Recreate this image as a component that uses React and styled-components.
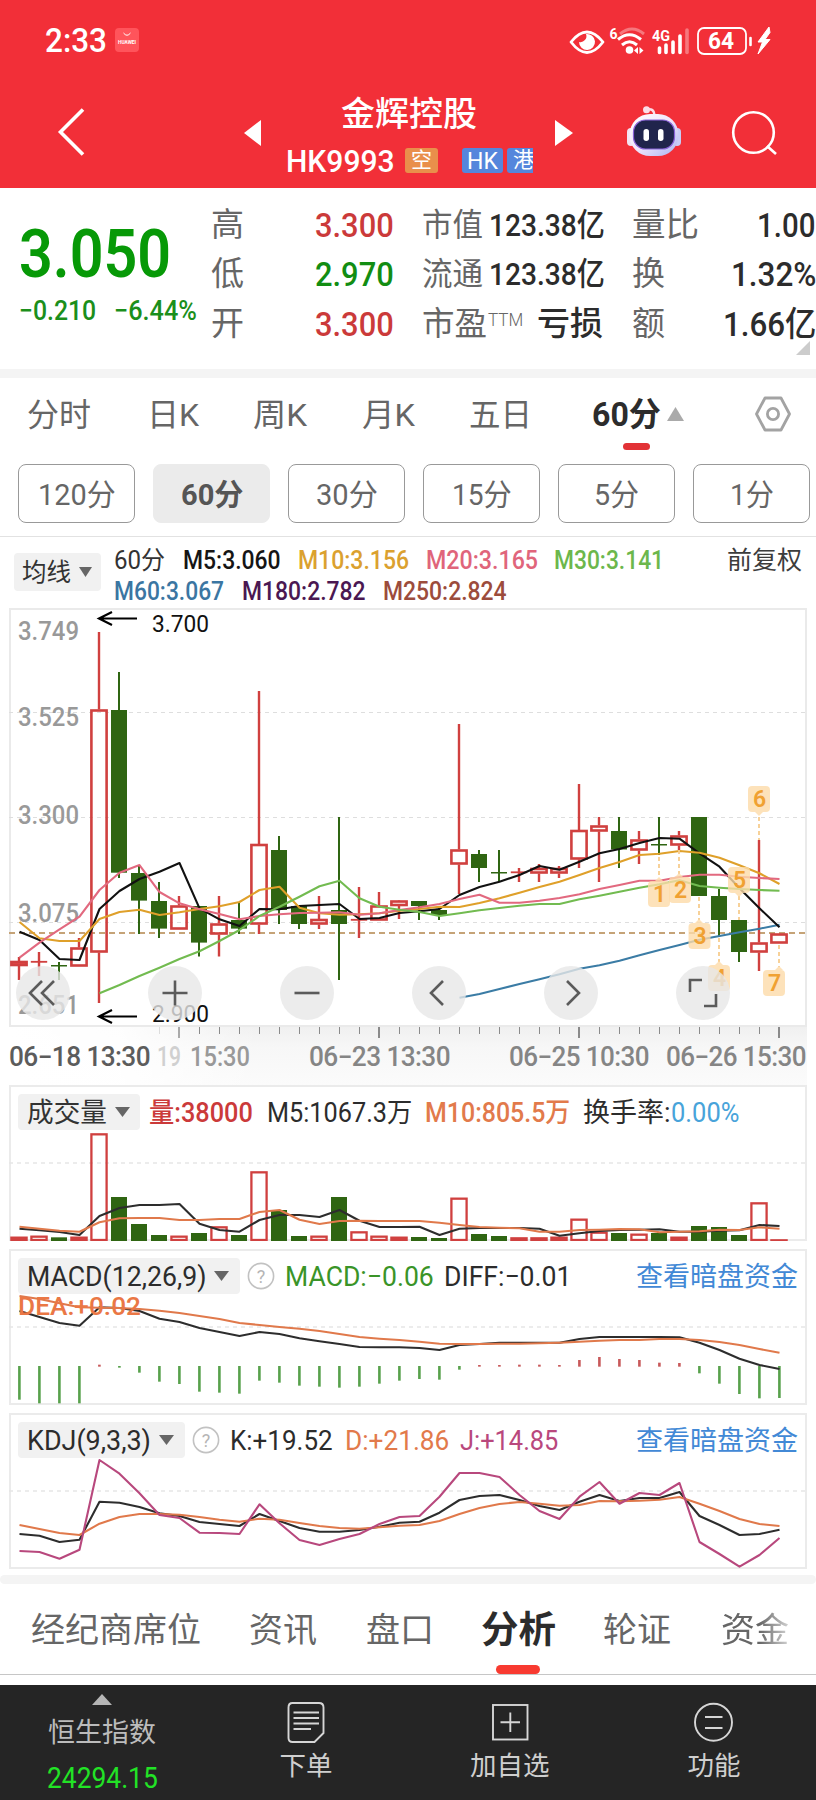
import React, { useLayoutEffect, useRef, useState } from "react";
import styled, { createGlobalStyle } from "styled-components";

const FONT = 'Roboto, "Noto Sans CJK SC", sans-serif';

const GlobalStyle = createGlobalStyle`
  * { box-sizing: border-box; }
  body { margin: 0; background: #fff; font-family: ${FONT}; }
  svg { display: block; flex: none; }
`;

/* ---------- text that is condensed to a given advance width ---------- */

const TextBox = styled.span`
  display: block;
  flex: none;
  width: ${(p) => p.$w}px;
  height: ${(p) => p.$lh}px;
  line-height: ${(p) => p.$lh}px;
  margin-left: ${(p) => p.$ml || 0}px;
  font-size: ${(p) => p.$size}px;
  font-weight: ${(p) => p.$weight || 400};
  color: ${(p) => p.$color || "inherit"};
  white-space: nowrap;
`;
const TextInner = styled.span`
  display: inline-block;
  transform-origin: 0 50%;
`;

function Text({ w, size, lh = 40, ml, weight, color, children }) {
  const ref = useRef(null);
  const [scale, setScale] = useState(1);
  useLayoutEffect(() => {
    setScale(w / ref.current.offsetWidth);
  }, [w, size, children]);
  return (
    <TextBox $w={w} $lh={lh} $ml={ml} $size={size} $weight={weight} $color={color}>
      <TextInner ref={ref} style={{ transform: `translateY(1px) scaleX(${scale})` }}>{children}</TextInner>
    </TextBox>
  );
}

/* ---------- header ---------- */

const Screen = styled.main`
  width: 816px;
  height: 1800px;
  overflow: hidden;
  display: flex;
  flex-direction: column;
  background: #fff;
`;
const Header = styled.header`
  height: 188px;
  flex: none;
  background: #f22f38;
  color: #fff;
`;
const StatusBar = styled.div`
  height: 79px;
  padding: 0 0 0 45px;
  display: flex;
  align-items: center;
`;
const AppBadge = styled.svg`
  margin: 0 429px 0 8px;
`;
const TitleBar = styled.div`
  height: 109px;
  display: flex;
`;
const TitleIcon = styled.svg`
  margin: ${(p) => p.$top}px 0 0 ${(p) => p.$left}px;
`;
const TitleBlock = styled.div`
  width: 248px;
  margin-left: 24px;
  padding-top: 13px;
`;
const Name = styled.div`
  padding-left: 55px;
`;
const CodeRow = styled.div`
  margin-top: 9px;
  display: flex;
  align-items: center;
`;
const Tag = styled.span`
  width: ${(p) => p.$w}px;
  height: 25px;
  margin-left: ${(p) => p.$ml}px;
  padding-left: ${(p) => p.$pad}px;
  border-radius: ${(p) => (p.$cut ? "3px 0 0 3px" : "3px")};
  background: ${(p) => p.$bg};
  overflow: hidden;
`;

function StatusIcons() {
  return (
    <svg width="204" height="32" viewBox="567 22 204 32" fill="none" stroke="#fff">
      <path d="M570 40 Q586 20 602 40 Q586 61 570 40Z" strokeWidth="2.800" strokeLinejoin="round" />
      <path d="M585 32 A8 8 0 1 1 578 40 A6 6 0 0 0 585 32Z" fill="#fff" stroke="none" />
      <text x="608.500" y="36.500" fontSize="14" fontWeight="700" fill="#fff" stroke="none">6</text>
      <path d="M619 32 Q631 22 643 32" strokeWidth="3" opacity=".35" />
      <path d="M617 37.500 Q628.500 28 640 37.500" strokeWidth="3" />
      <path d="M621 43 Q628.500 36.500 636 43" strokeWidth="3" />
      <circle cx="628.500" cy="48" r="3.800" fill="#fff" stroke="none" />
      <path d="M633 48.500 L637 45 V52ZM642.500 48.500 L638.500 45 V52Z" fill="#fff" stroke="none" />
      <text x="651" y="38.500" fontSize="15.500" fontWeight="700" fill="#fff" stroke="none" textLength="18" lengthAdjust="spacingAndGlyphs">4G</text>
      <path d="M658.500 46 V50.500 M665 43 V50.500 M672 40 V50.500 M679 34 V50.500" strokeWidth="3.600" strokeLinecap="round" />
      <path d="M686 28 V50.500" strokeWidth="3.600" strokeLinecap="round" opacity=".35" />
      <rect x="697" y="26" width="48" height="26" rx="6" strokeWidth="1.800" />
      <text x="707" y="47" fontSize="23" fontWeight="700" fill="#fff" stroke="none" textLength="26" lengthAdjust="spacingAndGlyphs">64</text>
      <path d="M749.500 36 V43" strokeWidth="2.600" strokeLinecap="round" />
      <path d="M768 25 L757 40 L761.500 40 L757 52 L769 37.500 L764 37.500 L769 30.500Z" fill="#fff" stroke="#fff" strokeWidth="1" />
    </svg>
  );
}

function Robot() {
  return (
    <TitleIcon $top={27} $left={53} width="56" height="52" viewBox="0 0 56 52">
      <defs>
        <linearGradient id="shell" x1="0" y1="0" x2="1" y2="1">
          <stop offset="0" stopColor="#fff" />
          <stop offset=".5" stopColor="#f1e5fb" />
          <stop offset="1" stopColor="#a7b4f2" />
        </linearGradient>
      </defs>
      <path d="M21 3.500 Q28 2 28.500 9" fill="none" stroke="#fbdde8" strokeWidth="2.500" />
      <circle cx="20.500" cy="3.800" r="3.500" fill="#fbdde8" />
      <rect x="1" y="22" width="8" height="18" rx="4" fill="#f3e3f2" />
      <rect x="47" y="22" width="8" height="18" rx="4" fill="#c9ccf6" />
      <rect x="3.500" y="8" width="49" height="42" rx="20.500" fill="url(#shell)" />
      <rect x="7.500" y="14" width="41" height="29" rx="12" fill="#20244c" stroke="#8a62d8" strokeWidth="1.200" />
      <rect x="17.500" y="23" width="5.500" height="12" rx="2.700" fill="#fff" />
      <rect x="32" y="23" width="5.500" height="12" rx="2.700" fill="#fff" />
    </TitleIcon>
  );
}

/* ---------- quote summary ---------- */

const Quote = styled.section`
  height: 181px;
  flex: none;
  display: flex;
  position: relative;
`;
const Price = styled.div`
  width: 212px;
  padding: 29px 0 0 19px;
`;
const Change = styled.div`
  display: flex;
  margin-top: 6px;
`;
const Facts = styled.div`
  padding-top: 11px;
`;
const Fact = styled.div`
  display: flex;
  align-items: center;
  height: 49.6px;
`;
const Sup = styled.span`
  display: flex;
  padding-bottom: 8px;
`;
const Corner = styled.svg`
  position: absolute;
  right: 6px;
  bottom: 14px;
`;
const Band = styled.div`
  height: 9px;
  flex: none;
  background: #f4f4f4;
`;

const GREEN = "#079907";
const RED = "#cb3a3a";
const LABEL = "#666";
const DARK = "#2c2c2c";

/* ---------- period tabs and chips ---------- */

const Periods = styled.nav`
  height: 86px;
  flex: none;
  display: flex;
  padding-top: 16px;
`;
const ActivePeriod = styled.div`
  margin-left: 60px;
  width: 95px;
`;
const PeriodRow = styled.div`
  display: flex;
  align-items: center;
  gap: 6px;
`;
const Bar = styled.div`
  width: ${(p) => p.$w}px;
  height: ${(p) => p.$h}px;
  margin: ${(p) => p.$m};
  border-radius: 5px;
  background: ${(p) => p.$bg};
`;
const Gear = styled.svg`
  margin: 1px 0 0 67px;
`;
const Chips = styled.div`
  height: 73px;
  flex: none;
  padding-left: 18px;
  display: flex;
  gap: 18px;
  border-bottom: 1px solid #e2e2e2;
`;
const Chip = styled.div`
  width: 117px;
  height: 59px;
  flex: none;
  display: flex;
  justify-content: center;
  align-items: center;
  border-radius: 8px;
  border: 1px solid ${(p) => (p.$on ? "#ebebeb" : "#999")};
  background: ${(p) => (p.$on ? "#ebebeb" : "#fff")};
`;

/* ---------- charts ---------- */

const MaHead = styled.div`
  height: 71px;
  flex: none;
  padding-left: 14px;
  display: flex;
`;
const Picker = styled.div`
  height: ${(p) => p.$h || 36}px;
  width: ${(p) => p.$w}px;
  padding-left: ${(p) => p.$pad || 9}px;
  margin-top: ${(p) => p.$mt || 0}px;
  flex: none;
  display: flex;
  align-items: center;
  gap: 8px;
  border-radius: 4px;
  background: #f1f1f1;
`;
const MaLines = styled.div`
  padding-top: 6px;
  margin-left: 13px;
  width: 600px;
  flex: none;
`;
const Adjust = styled.div`
  padding-top: 6px;
  margin-left: 13px;
`;
const MaRow = styled.div`
  display: flex;
  height: 31px;
`;
const ChartArea = styled.section`
  position: relative;
  height: 477px;
  flex: none;
`;
const Controls = styled.div`
  position: absolute;
  left: 16px;
  top: 358px;
  display: flex;
  gap: 78px;
`;
const RoundButton = styled.div`
  width: 54px;
  height: 54px;
  border-radius: 50%;
  background: rgba(231, 231, 231, 0.8);
`;
const Panel = styled.section`
  position: relative;
  height: 156px;
  width: 798px;
  margin: 0 0 8px 9px;
  flex: none;
`;
const PanelHead = styled.div`
  position: absolute;
  left: 9px;
  top: 9px;
  display: flex;
  align-items: center;
`;
const Help = styled.svg`
  margin-left: ${(p) => p.$ml}px;
`;

const X = (i) => 19 + 20 * i;
const CHART_RED = "#d0403f";
const CHART_GREEN = "#2f6512";

function Line({ ys, from = 0, base, color, width = 2.1 }) {
  const points = ys.map((y, i) => `${X(i + from) + 0.5},${(base + y / 3).toFixed(1)}`).join(" ");
  return <polyline points={points} fill="none" stroke={color} strokeWidth={width} strokeLinejoin="round" />;
}

/* kind, body top, body bottom, wick top, wick bottom */
const candles = [
  ["r", 961, 966, 957, 980], ["r", 961.5, 962.5, 952, 976], ["g", 965, 966.5, 962, 980], ["r", 947.5, 966.5, 938, 947],
  ["r", 709.5, 952.5, 632, 1003], ["g", 710, 872.7, 672, 878], ["g", 873, 900.6, 865, 934], ["g", 901, 928.6, 882, 938],
  ["r", 905.5, 929.5, 896, 905], ["g", 906, 942.6, 906, 956.5], ["r", 923.5, 934.5, 896, 956.5], ["g", 920, 928.6, 902, 934],
  ["r", 844, 924.5, 691, 934], ["g", 850, 910, 836, 924], ["g", 906, 924, 906, 929], ["r", 919, 924.5, 896, 929],
  ["g", 910, 924, 817, 980], ["r", 919.5, 920.5, 887, 938], ["r", 905.5, 920.5, 892, 906], ["r", 900.5, 906, 900, 919],
  ["g", 901, 906, 901, 920], ["g", 910, 915, 906, 920], ["r", 849.5, 864.5, 724, 894], ["g", 854, 868, 850, 882],
  ["g", 872, 873.5, 850, 882], ["r", 872, 873.5, 868, 882], ["r", 868, 873.5, 864, 882], ["r", 868, 873.5, 866, 878],
  ["r", 830, 859.5, 784, 868], ["r", 825.5, 831.5, 817, 882], ["g", 831, 849.5, 817, 868], ["r", 839.5, 850.5, 831, 864],
  ["g", 844, 845.5, 817, 855], ["r", 835.5, 845.5, 831, 850], ["g", 817, 896, 817, 896], ["g", 896, 920, 889, 937],
  ["g", 920, 952, 920, 962], ["r", 942.5, 952.5, 840, 971], ["r", 933.5, 943.5, 934, 943],
];

function Candle({ i, c: [kind, top, bottom, high, low] }) {
  const x = X(i);
  if (kind === "g") {
    return (
      <g fill={CHART_GREEN}>
        <rect x={x - 1} y={high} width="2" height={low - high} />
        <rect x={x - 8} y={top} width="16" height={bottom - top} />
      </g>
    );
  }
  const flat = bottom - top < 2;
  const solid = bottom - top < 5.5 && i < 16;
  return (
    <g>
      <rect x={x - 1.2} y={high} width="2.400" height={Math.max(0, (flat ? low : top) - high)} fill={CHART_RED} />
      {!flat && <rect x={x - 1.2} y={bottom} width="2.400" height={Math.max(0, low - bottom)} fill={CHART_RED} />}
      <rect x={x - 7.6} y={top + (flat ? 0 : 1)} width="15.200" height={Math.max(0.6, bottom - top - 2)}
        fill={flat ? CHART_RED : solid ? "#ee4a49" : "none"} stroke={CHART_RED} strokeWidth={flat ? 1.2 : 2.6} />
    </g>
  );
}

const ma5 = [425,450,507,510,357,303,267,245,219,355,388,408,357,358,348,345,342,387,384,369,364,357,315,291,275,255,228,239,215,190,177,159,144,146,190,230,295,355,412];
const ma10 = [396,445,453,453,387,366,359,375,367,357,349,336,300,290,353,370,374,373,370,362,357,350,351,339,325,308,291,275,255,234,216,195,191,183,188,203,226,250,282];
const ma20 = [503,458,418,380,300,248,225,306,340,358,372,388,378,373,369,368,367,374,370,360,352,342,327,314,338,338,332,324,313,297,285,272,272,261,254,254,260,264,267];
const ma30 = [610,585,558,533,507,484,453,420,378,350,320,289,272,325,350,359,366,378,370,361,354,347,342,342,328,317,305,293,283,271,288,293,297,300,302];
const ma60 = [623,612,597,582,568,553,536,526,512,496,480,465,449,438,427,416,404];

/* label, box left, box top, pointer side, dashed line x, y1, y2 */
const marks = [
  [1, 648, 881, "up", 659, 857, 878], [2, 669, 877, "up", 679, 850, 874], [3, 688.5, 923, "up", 699, 897, 920],
  [4, 708, 965, "up", 719, 938, 962], [5, 728, 867, "down", 739, 896, 920], [6, 748, 786, "down", 759, 817, 840],
  [7, 763, 970, "up", 779, 945, 967],
];

const Dash = ({ y, x1 = 9, x2 = 806, color = "#dedede", w = 1.2, d = "4 4" }) => (
  <line x1={x1} x2={x2} y1={y} y2={y} stroke={color} strokeWidth={w} strokeDasharray={d} />
);

const Fixed = ({ x, y, w, size, color, weight = 400, spacing = 0, children }) => (
  <text x={x} y={y} textLength={w} lengthAdjust="spacingAndGlyphs" letterSpacing={spacing} fontSize={size} fontWeight={weight} fill={color}>
    {children}
  </text>
);

function PriceChart() {
  return (
    <ChartArea>
      <svg width="816" height="477" viewBox="0 608 816 477">
        <defs>
          <linearGradient id="axis" x1="0" y1="0" x2="0" y2="1">
            <stop offset="0" stopColor="#f0f0f0" />
            <stop offset=".35" stopColor="#f7f7f7" />
            <stop offset="1" stopColor="#fbfbfb" />
          </linearGradient>
          <linearGradient id="fade" x1="0" y1="0" x2="1" y2="0">
            <stop offset="0" stopColor="#fff" />
            <stop offset=".45" stopColor="#fff" stopOpacity=".9" />
            <stop offset="1" stopColor="#fff" stopOpacity="0" />
          </linearGradient>
        </defs>
        <rect x="10" y="1027" width="797" height="58" fill="url(#axis)" />
        <rect x="9" y="1027" width="250" height="58" fill="url(#fade)" />
        <rect x="10" y="609" width="796" height="417" fill="none" stroke="#eaeaea" strokeWidth="2" />
        <Dash y={712.5} />
        <Dash y={817.5} />
        <Dash y={922.5} />
        {[["3.749", 640], ["3.525", 726], ["3.300", 824], ["3.075", 922], ["2.651", 1014]].map(([t, y]) => (
          <Fixed key={t} x={18} y={y} w={61} size={26} color="#999" weight={500}>{t}</Fixed>
        ))}
        <Dash y={933} color="#c5a377" w={1.8} d="6 4" />
        {candles.map((c, i) => <Candle key={i} i={i} c={c} />)}
        <Line ys={ma60} from={22} base={790} color="#3b7ca5" />
        <Line ys={ma5} base={790} color="#111" />
        <Line ys={ma10} base={790} color="#dfa02a" />
        <Line ys={ma20} base={790} color="#e2697f" />
        <Line ys={ma30} from={4} base={790} color="#72bb50" />
        {marks.map(([n, x, y, side, lx, y1, y2]) => (
          <g key={n}>
            <line x1={lx} x2={lx} y1={y1} y2={y2} stroke="#f7cd8e" strokeWidth="1.800" strokeDasharray="4 3" />
            <g fill="#fddcaa" opacity=".8">
              <rect x={x} y={y} width="22" height="26" rx="4" />
              {side === "up" ? <path d={`M${lx - 4} ${y} L${lx} ${y - 4} L${lx + 4} ${y}Z`} />
                : <path d={`M${lx - 4} ${y + 26} L${lx} ${y + 30} L${lx + 4} ${y + 26}Z`} />}
            </g>
            <text x={x + 11.5} y={y + 21} textAnchor="middle" fontSize="23" fontWeight="600" fill="#f0a132">{n}</text>
          </g>
        ))}
        {[[618.5, 632.3, "3.700"], [1016.5, 1022, "2.900"]].map(([ay, ty, t]) => (
          <g key={t}>
            <path d={`M137 ${ay} H99 M112 ${ay - 6.5} L99 ${ay} L112 ${ay + 6.5}`} stroke="#000" strokeWidth="2.200" fill="none" />
            <Fixed x={152} y={ty} w={57} size={24.5} color="#111">{t}</Fixed>
          </g>
        ))}
        {Array.from({ length: 32 }, (_, k) => k + 7).map((i) => {
          const major = i % 10 === 8;
          return <line key={i} x1={X(i) + (major ? 0 : 0.5)} x2={X(i) + (major ? 0 : 0.5)} y1="1027" y2={major ? 1038 : 1034}
            stroke="#8a8a8a" strokeWidth={major ? 2 : 1} opacity={i === 7 ? 0.25 : i === 8 ? 0.7 : 1} />;
        })}
        <Fixed x={9} y={1066} w={141} size={27} spacing={-0.6} color="#5c5c5c" weight={500}>06−18 13:30</Fixed>
        <Fixed x={157} y={1066} w={24} size={27} color="#d0d0d0" weight={500}>19</Fixed>
        <Fixed x={190} y={1066} w={60} size={27} color="#999" weight={500}>15:30</Fixed>
        <Fixed x={309} y={1066} w={141} size={27} spacing={-0.6} color="#858585" weight={500}>06−23 13:30</Fixed>
        <Fixed x={509} y={1066} w={140} size={27} spacing={-0.6} color="#858585" weight={500}>06−25 10:30</Fixed>
        <Fixed x={666} y={1066} w={140} size={27} spacing={-0.6} color="#858585" weight={500}>06−26 15:30</Fixed>
      </svg>
      <Controls>
        {["M26 15 L14 27 L26 39 M38 15 L26 27 L38 39", "M14.500 27 H39.500 M27 14.500 V39.500", "M14.500 27 H39.500",
          "M31 15 L19 27 L31 39", "M23 15 L35 27 L23 39", "M14 26 V14 H26 M40 28 V40 H28"].map((d) => (
          <RoundButton key={d}>
            <svg width="54" height="54"><path d={d} fill="none" stroke="#5b5b5b" strokeWidth="2.600" /></svg>
          </RoundButton>
        ))}
      </Controls>
    </ChartArea>
  );
}

const volume = "r485 r482 g487 r485 r175 g366 g447 g480 r482 g474 r454 g480 r289 g405 g483 r482 g366 r469 r482 r485 g486 g489 r368 g477 g483 r487 r487 r485 r431 r470 g474 r476 g474 r485 g453 g456 g480 r382 r493".split(" ");
const v5 = [461,466,471,480,423,399,390,390,387,446,465,470,435,420,420,426,405,437,456,456,455,480,461,459,459,459,461,482,475,468,465,464,463,470,470,467,466,450,453];
const v10 = [455,461,467,470,442,430,429,429,435,435,432,432,411,405,434,447,438,437,438,438,438,443,450,456,458,460,470,470,465,464,462,463,472,470,469,464,465,457,461];
const diff = [708,726,744,752,697,699,708,731,741,759,771,783,771,777,790,799,807,816,817,817,819,825,810,807,803,803,803,803,792,786,786,786,786,787,803,825,851,870,882];
const dea = [663,672,685,697,698,699,702,707,714,723,732,744,750,756,761,768,777,786,791,795,800,806,807,807,806,806,805,803,800,797,795,795,792,792,795,801,810,822,833];
const hist = [974,985,985,985,869,878,893,920,927,950,953,956,917,923,932,935,938,935,926,917,912,914,884,870,870,869,869,870,855,846,852,855,863,864,895,926,957,970,969];
const kk = [1377,1382,1401,1394,1280,1283,1296,1315,1323,1341,1347,1353,1317,1338,1359,1370,1370,1365,1355,1343,1340,1313,1275,1263,1260,1275,1293,1305,1280,1260,1278,1269,1269,1251,1323,1350,1380,1377,1364];
const dd = [1350,1362,1374,1380,1346,1326,1317,1317,1319,1326,1334,1340,1331,1334,1344,1353,1359,1361,1357,1352,1350,1338,1317,1299,1287,1281,1286,1292,1290,1278,1279,1277,1274,1266,1286,1308,1332,1347,1353];
const jj = [1428,1431,1451,1424,1155,1196,1255,1320,1329,1373,1374,1377,1288,1345,1395,1410,1392,1377,1347,1326,1323,1265,1194,1194,1206,1260,1308,1332,1265,1221,1286,1254,1260,1224,1401,1437,1475,1440,1389];

function PanelChart({ top, children }) {
  return (
    <svg width="798" height="156" viewBox={`9 ${top} 798 156`}>
      <rect x="10" y={top + 1} width="796" height="154" fill="none" stroke="#ebebeb" strokeWidth="2" />
      <Dash y={top + 78} w={1.6} color="#e6e6e6" />
      {children}
    </svg>
  );
}

const Caret = ({ up, w = 15, h = 10, color = "#666" }) => (
  <svg width={w} height={h} viewBox="0 0 14 10" preserveAspectRatio="none">
    <path d={up ? "M7 0 L14 10 H0Z" : "M0 0 H14 L7 10Z"} fill={color} />
  </svg>
);

const HelpIcon = ({ ml }) => (
  <Help $ml={ml} width="28" height="28" viewBox="0 0 28 28">
    <circle cx="14" cy="14" r="12.600" fill="none" stroke="#c2c2c2" strokeWidth="1.600" />
    <text x="14" y="20.500" textAnchor="middle" fontSize="18" fill="#b5b5b5">?</text>
  </Help>
);

/* ---------- bottom tabs and toolbar ---------- */

const Sections = styled.nav`
  height: 91px;
  flex: none;
  display: flex;
  padding-top: 24px;
  border-bottom: 1px solid #c6c6c6;
`;
const ActiveSection = styled.div`
  margin-left: 49px;
  width: 77px;
`;
const FadeOut = styled.div`
  -webkit-mask-image: linear-gradient(90deg, #000 75%, rgba(0, 0, 0, 0.35) 98%);
  mask-image: linear-gradient(90deg, #000 75%, rgba(0, 0, 0, 0.35) 98%);
  padding-left: 50px;
`;
const Toolbar = styled.footer`
  height: 115px;
  flex: none;
  margin-top: 10px;
  display: flex;
  background: #252525;
`;
const ToolItem = styled.div`
  width: 204px;
  padding-top: ${(p) => p.$top || 15}px;
  display: flex;
  flex-direction: column;
  align-items: center;
  color: #cfcfcf;
`;

const ToolIcon = ({ children }) => (
  <svg width="44" height="44" viewBox="0 0 44 44" fill="none" stroke="#d6d6d6" strokeWidth="1.900">{children}</svg>
);

export default function App() {
  return (
    <Screen>
      <GlobalStyle />
      <Header>
        <StatusBar>
          <Text w={62} size={33} lh={40} weight={500}>2:33</Text>
          <AppBadge width="24" height="24" viewBox="0 0 24 24">
            <rect width="24" height="24" rx="4" fill="#ff545b" />
            <path d="M8.500 5 Q12 9.500 15.500 5" fill="none" stroke="#fff" strokeWidth="1" />
            <text x="3" y="16" fontSize="5" fontWeight="700" fill="#fff" textLength="18" lengthAdjust="spacingAndGlyphs">HUAWEI</text>
          </AppBadge>
          <StatusIcons />
        </StatusBar>
        <TitleBar>
          <TitleIcon $top={27} $left={56} width="30" height="52" viewBox="0 0 30 52">
            <path d="M27 3.500 L4.500 26 L27 48.500" fill="none" stroke="#fff" strokeWidth="3.600" />
          </TitleIcon>
          <TitleIcon $top={41} $left={157} width="19" height="26" viewBox="0 0 19 26">
            <path d="M18 0 V26 L1 13Z" fill="#fff" />
          </TitleIcon>
          <TitleBlock>
            <Name><Text w={136} size={34} lh={42} weight={500}>金辉控股</Text></Name>
            <CodeRow>
              <Text w={109} size={32} lh={34} weight={500}>HK9993</Text>
              <Tag $w={33} $ml={10} $pad={6} $bg="#e98f4b"><Text w={21} size={21} lh={23}>空</Text></Tag>
              <Tag $w={41} $ml={24} $pad={5} $bg="#5586dc"><Text w={31} size={23} lh={25}>HK</Text></Tag>
              <Tag $w={26} $ml={4} $pad={6} $cut $bg="#5586dc"><Text w={21} size={21} lh={23}>港</Text></Tag>
            </CodeRow>
          </TitleBlock>
          <TitleIcon $top={41} $left={21} width="18" height="26" viewBox="0 0 18 26">
            <path d="M0 0 V26 L18 13Z" fill="#fff" />
          </TitleIcon>
          <Robot />
          <TitleIcon $top={30} $left={48} width="50" height="50" viewBox="0 0 50 50" fill="none" stroke="#fff" strokeWidth="2.600">
            <circle cx="23.500" cy="23.500" r="20.300" />
            <path d="M37 37 L46 45" />
          </TitleIcon>
        </TitleBar>
      </Header>

      <Quote>
        <Price>
          <Text w={152} size={67} lh={72} weight={600} color={GREEN}>3.050</Text>
          <Change>
            <Text w={77} size={28} lh={30} weight={500} color="#1b8f1b">−0.210</Text>
            <Text w={83} ml={18} size={28} lh={30} weight={500} color="#1b8f1b">−6.44%</Text>
          </Change>
        </Price>
        <Facts>
          {[["高", "3.300", RED], ["低", "2.970", "#128d12"], ["开", "3.300", RED]].map(([k, v, c]) => (
            <Fact key={k}>
              <Text w={33} size={33} color={LABEL}>{k}</Text>
              <Text w={79} ml={71} size={34} weight={500} color={c}>{v}</Text>
            </Fact>
          ))}
        </Facts>
        <Facts>
          <Fact>
            <Text w={61} ml={28} size={32} color={LABEL}>市值</Text>
            <Text w={116} ml={6} size={32} weight={500} color={DARK}>123.38亿</Text>
          </Fact>
          <Fact>
            <Text w={61} ml={28} size={32} color={LABEL}>流通</Text>
            <Text w={116} ml={6} size={32} weight={500} color={DARK}>123.38亿</Text>
          </Fact>
          <Fact>
            <Text w={65} ml={28} size={33} color={LABEL}>市盈</Text>
            <Sup><Text w={35} ml={1} size={18.5} weight={300} color={LABEL}>TTM</Text></Sup>
            <Text w={66} ml={14} size={33} weight={500} color={DARK}>亏损</Text>
          </Fact>
        </Facts>
        <Facts>
          <Fact>
            <Text w={67} ml={27} size={33} color={LABEL}>量比</Text>
            <Text w={58} ml={58} size={34} weight={500} color={DARK}>1.00</Text>
          </Fact>
          <Fact>
            <Text w={33} ml={27} size={33} color={LABEL}>换</Text>
            <Text w={85} ml={66} size={34} weight={500} color={DARK}>1.32%</Text>
          </Fact>
          <Fact>
            <Text w={33} ml={27} size={33} color={LABEL}>额</Text>
            <Text w={93} ml={58} size={34} weight={500} color={DARK}>1.66亿</Text>
          </Fact>
        </Facts>
        <Corner width="14" height="14"><path d="M14 0 V14 H0Z" fill="#ccc" /></Corner>
      </Quote>
      <Band />

      <Periods>
        <Text w={64} ml={27} size={32} color={LABEL}>分时</Text>
        <Text w={52} ml={56} size={32} color={LABEL}>日K</Text>
        <Text w={54} ml={54} size={32} color={LABEL}>周K</Text>
        <Text w={53} ml={55} size={32} color={LABEL}>月K</Text>
        <Text w={63} ml={54} size={32} color={LABEL}>五日</Text>
        <ActivePeriod>
          <PeriodRow>
            <Text w={69} size={33} weight={700} color={DARK}>60分</Text>
            <Caret up w={17} h={14} color="#aaa" />
          </PeriodRow>
          <Bar $w={27} $h={7} $m="9px 0 0 31px" $bg="#e23236" />
        </ActivePeriod>
        <Gear width="38" height="38" viewBox="0 0 38 38" fill="none" stroke="#a3a3a3" strokeWidth="2.800" strokeLinejoin="round">
          <path d="M11 3 H27 L35.500 19 L27 35 H11 L2.500 19Z" />
          <circle cx="19" cy="19" r="5.600" />
        </Gear>
      </Periods>
      <Chips>
        {[["120分", 78], ["60分", 62], ["30分", 62], ["15分", 60], ["5分", 45], ["1分", 44]].map(([t, w], i) => (
          <Chip key={t} $on={i === 1}>
            <Text w={w} size={30} weight={i === 1 ? 700 : 400} color={i === 1 ? "#555" : LABEL}>{t}</Text>
          </Chip>
        ))}
      </Chips>

      <MaHead>
        <Picker $w={87} $h={38} $pad={8} $mt={16}>
          <Text w={49} size={25} lh={36} color="#333">均线</Text>
          <Caret w={13} />
        </Picker>
        <MaLines>
          <MaRow>
            <Text w={51} size={25.5} lh={33} color="#333">60分</Text>
            <Text w={98} ml={18} size={25.5} lh={33} weight={500} color="#151515">M5:3.060</Text>
            <Text w={111} ml={17} size={25.5} lh={33} weight={500} color="#dba12f">M10:3.156</Text>
            <Text w={112} ml={17} size={25.5} lh={33} weight={500} color="#e0657b">M20:3.165</Text>
            <Text w={110} ml={16} size={25.5} lh={33} weight={500} color="#6cb74c">M30:3.141</Text>
          </MaRow>
          <MaRow>
            <Text w={110} size={25.5} lh={33} weight={500} color="#3b76a2">M60:3.067</Text>
            <Text w={124} ml={18} size={25.5} lh={33} weight={500} color="#4b1852">M180:2.782</Text>
            <Text w={124} ml={17} size={25.5} lh={33} weight={500} color="#9c4c3c">M250:2.824</Text>
          </MaRow>
        </MaLines>
        <Adjust>
          <Text w={75} size={25} lh={33} color="#3c3c3c">前复权</Text>
        </Adjust>
      </MaHead>

      <PriceChart />

      <Panel>
        <PanelChart top={1085}>
          {volume.map((v, i) => {
            const y = 1075 + Number(v.slice(1)) / 3;
            if (v[0] === "g") return <rect key={i} x={X(i) - 8} y={y} width="16" height={1241 - y} fill={CHART_GREEN} />;
            return <rect key={i} x={X(i) - 7.6} y={y + 1} width="15.200" height={Math.max(0.5, 1239 - y)}
              fill={y > 1236 ? "#ff6a6a" : "none"} stroke={CHART_RED} strokeWidth="2.300" />;
          })}
          <Line ys={v5} base={1075} color="#2d2d2d" />
          <Line ys={v10} base={1075} color="#e0794b" />
        </PanelChart>
        <PanelHead>
          <Picker $w={122}>
            <Text w={80} size={27} lh={34} color="#333">成交量</Text>
            <Caret />
          </Picker>
          <Text w={104} ml={9} size={27} lh={36} weight={500} color={RED}>量:38000</Text>
          <Text w={145} ml={14} size={27} lh={36} color={DARK}>M5:1067.3万</Text>
          <Text w={145} ml={13} size={27} lh={36} weight={500} color="#e27a4b">M10:805.5万</Text>
          <Text w={88} ml={13} size={27} lh={36} color={DARK}>换手率:</Text>
          <Text w={68} ml={0} size={27} lh={36} color="#48a3da">0.00%</Text>
        </PanelHead>
      </Panel>

      <Panel>
        <PanelChart top={1249}>
          {hist.map((h, i) => {
            const up = h < 873;
            const a = 1075 + Math.min(h, 873) / 3;
            const b = 1075 + Math.max(h, up ? 875 : 873) / 3;
            return <rect key={i} x={X(i) - 0.9} y={a} width="2.600" height={b - a} fill={up ? "#c8595a" : "#58a14c"} />;
          })}
          <Line ys={diff} base={1075} color="#2d2d2d" />
          <Line ys={dea} base={1075} color="#e0794b" />
          <Fixed x={18} y={1315} w={123} size={26.5} color="#ea7745" weight={500}>DEA:+0.02</Fixed>
        </PanelChart>
        <PanelHead>
          <Picker $w={222}>
            <Text w={179} size={28} lh={38} color={DARK}>MACD(12,26,9)</Text>
            <Caret />
          </Picker>
          <HelpIcon ml={7} />
          <Text w={149} ml={10} size={28} lh={36} color="#3a9428">MACD:−0.06</Text>
          <Text w={127} ml={10} size={28} lh={36} color={DARK}>DIFF:−0.01</Text>
          <Text w={162} ml={65} size={27} lh={36} color="#4289d6">查看暗盘资金</Text>
        </PanelHead>
      </Panel>

      <Panel>
        <PanelChart top={1413}>
          <Line ys={kk} base={1075} color="#2d2d2d" />
          <Line ys={dd} base={1075} color="#e0794b" />
          <Line ys={jj} base={1075} color="#b8487d" />
        </PanelChart>
        <PanelHead>
          <Picker $w={167}>
            <Text w={124} size={28} lh={38} color={DARK}>KDJ(9,3,3)</Text>
            <Caret />
          </Picker>
          <HelpIcon ml={7} />
          <Text w={103} ml={10} size={28} lh={36} color={DARK}>K:+19.52</Text>
          <Text w={104} ml={12} size={28} lh={36} color="#e27a4b">D:+21.86</Text>
          <Text w={98} ml={11} size={28} lh={36} color="#b9487d">J:+14.85</Text>
          <Text w={162} ml={78} size={27} lh={36} color="#4289d6">查看暗盘资金</Text>
        </PanelHead>
      </Panel>

      <Bar $w={816} $h={9} $m="-2px 0 0" $bg="#f4f4f4" />
      <Sections>
        <Text w={170} ml={31} size={34} lh={42} color={LABEL}>经纪商席位</Text>
        <Text w={68} ml={48} size={34} lh={42} color={LABEL}>资讯</Text>
        <Text w={68} ml={49} size={34} lh={42} color={LABEL}>盘口</Text>
        <ActiveSection>
          <Text w={75} ml={-2} size={37} lh={43} weight={700} color={DARK}>分析</Text>
          <Bar $w={44} $h={9} $m="14px 0 0 13px" $bg="#f83a30" />
        </ActiveSection>
        <Text w={68} ml={43} size={34} lh={42} color={LABEL}>轮证</Text>
        <FadeOut><Text w={68} size={34} lh={42} color={LABEL}>资金</Text></FadeOut>
      </Sections>

      <Toolbar>
        <ToolItem $top={9}>
          <Caret up w={20} h={11} color="#b5b5b5" />
          <Text w={108} size={27} lh={54} color="#bcbcbc">恒生指数</Text>
          <Text w={111} size={29} lh={36} color="#22e326">24294.15</Text>
        </ToolItem>
        <ToolItem>
          <ToolIcon>
            <path d="M8.500 3 H35 Q39.500 3 39.500 7.500 V33 L30.500 42 H8.500 Q4.500 42 4.500 38 V7.500 Q4.500 3 8.500 3Z" />
            <path d="M9.500 12.500 H35 M9.500 18 H35 M9.500 23.500 H35 M9.500 29 H27" />
          </ToolIcon>
          <Text w={53} size={26.5} lh={41}>下单</Text>
        </ToolItem>
        <ToolItem>
          <ToolIcon>
            <rect x="5" y="5" width="34.500" height="34.500" />
            <path d="M12.500 22.300 H32 M22.300 12.500 V32" />
          </ToolIcon>
          <Text w={80} size={26.5} lh={41}>加自选</Text>
        </ToolItem>
        <ToolItem>
          <ToolIcon>
            <circle cx="21.500" cy="22.300" r="18.500" />
            <path d="M13 17 H30.500 M13 28 H30.500" />
          </ToolIcon>
          <Text w={53} size={26.5} lh={41}>功能</Text>
        </ToolItem>
      </Toolbar>
    </Screen>
  );
}
